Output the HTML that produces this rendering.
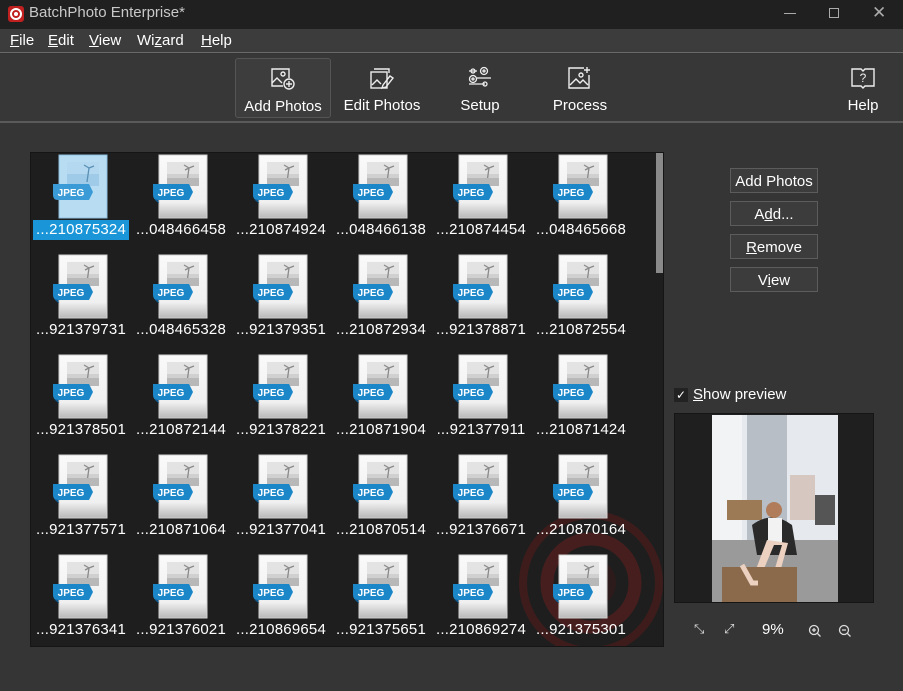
<!DOCTYPE html>
<html><head><meta charset="utf-8"><style>
*{margin:0;padding:0;box-sizing:border-box}
body{width:903px;height:691px;background:#353535;font-family:"Segoe UI","Liberation Sans",sans-serif;color:#fff;position:relative;overflow:hidden;font-size:15px}
.title{position:absolute;left:0;top:0;width:903px;height:29px;background:#202020;color:#c8c8c8}
.menu{position:absolute;top:29px;left:0;width:903px;height:24px;background:#3c3c3c;border-bottom:1px solid #6a6a6a}
.menu span{position:absolute;top:3px;font-size:15px;color:#fff}
.tool{position:absolute;top:54px;left:0;width:903px;height:69px;background:#373737;border-bottom:2px solid #5a5a5a}
.tb{position:absolute;top:4px;height:60px;text-align:center;font-size:15px}
.tb svg{display:block;margin:7px auto 6px}
.list{position:absolute;left:30px;top:152px;width:634px;height:495px;background:#1e1e1e;border:1px solid #151515;overflow:hidden}
.cell{position:absolute;width:100px;height:100px;text-align:center}
.cell svg{position:absolute;left:21px;top:1px}
.cell .l{position:absolute;left:2px;top:67px;width:96px;height:20px;line-height:20px;font-size:15px;color:#fff;letter-spacing:0.2px}
.sel .l{background:#1a96d8}
.btn{position:absolute;left:730px;width:88px;height:25px;background:#3c3c3c;border:1px solid #5c5c5c;text-align:center;line-height:25px;font-size:15px}
u{text-decoration:underline}
</style></head><body>
<svg width="0" height="0" style="position:absolute"><defs>
<linearGradient id="pg" x1="0" y1="0" x2="0" y2="1"><stop offset="0" stop-color="#fafafa"/><stop offset=".75" stop-color="#f0f0f0"/><stop offset="1" stop-color="#b8b8b8"/></linearGradient>
<symbol id="doc" viewBox="0 0 58 66">
<path d="M7 1h48v63H7z" fill="url(#pg)" stroke="#d0d0d0"/>
<rect x="15" y="8" width="32" height="24" fill="#d0d0d0"/>
<rect x="15" y="8" width="32" height="12" fill="#e3e3e3"/>
<path d="M35 28 L37 14 M37 14 l-5 -3 M37 14 l5 -2 M37 14 l-4 2" stroke="#8a8a8a" stroke-width="1.3" fill="none"/>
<rect x="15" y="24" width="32" height="8" fill="#b8b8b8"/>
<path d="M1 30 H37 L41 38 L37 46 H6 Q1 46 1 41z" fill="#1b86c8"/>
<path d="M1 41 Q1 46 6 46 L7 49 Q2 47 1 41z" fill="#0c5a8f"/>
<text x="19" y="42" font-family="Liberation Sans,sans-serif" font-size="10" font-weight="bold" fill="#fff" text-anchor="middle">JPEG</text>
</symbol>
<symbol id="docs" viewBox="0 0 58 66">
<path d="M7 1h48v63H7z" fill="#b8dcf2" stroke="#8fc0e0"/>
<rect x="15" y="8" width="32" height="24" fill="#9fcbe8"/>
<rect x="15" y="8" width="32" height="12" fill="#b3d8ef"/>
<path d="M35 28 L37 14 M37 14 l-5 -3 M37 14 l5 -2" stroke="#5a90b5" stroke-width="1.3" fill="none"/>
<path d="M1 30 H37 L41 38 L37 46 H6 Q1 46 1 41z" fill="#3a9bd6"/>
<text x="19" y="42" font-family="Liberation Sans,sans-serif" font-size="10" font-weight="bold" fill="#fff" text-anchor="middle">JPEG</text>
</symbol>
</defs></svg>
<div class="title">
<svg style="position:absolute;left:8px;top:6px" width="16" height="16"><rect width="16" height="16" rx="3" fill="#c0201f"/><circle cx="8" cy="8" r="5" fill="none" stroke="#fff" stroke-width="2"/><circle cx="8" cy="8" r="2" fill="#fff"/></svg>
<span style="position:absolute;left:29px;top:4px;font-size:15px">BatchPhoto Enterprise*</span>
<span style="position:absolute;left:784px;top:13px;width:12px;height:1px;background:#aaa"></span>
<span style="position:absolute;left:829px;top:8px;width:10px;height:10px;border:1px solid #aaa"></span>
<span style="position:absolute;left:872px;top:3px;font-size:17px;color:#aaa">✕</span>
</div>
<div class="menu">
<span style="left:10px"><u>F</u>ile</span><span style="left:48px"><u>E</u>dit</span><span style="left:89px"><u>V</u>iew</span><span style="left:137px">Wi<u>z</u>ard</span><span style="left:201px"><u>H</u>elp</span>
</div>
<div class="tool">
<div class="tb" style="left:235px;width:96px;background:#3d3d3d;border:1px solid #555;border-radius:3px">
<svg width="26" height="26" viewBox="0 0 26 24" fill="none" stroke="#eee" stroke-width="1.4"><path d="M13 19H2V2h17v9"/><circle cx="13" cy="7" r="2"/><path d="M2 16l5-5 5 5"/><circle cx="19" cy="17" r="5"/><path d="M19 14v6M16 17h6"/></svg>Add Photos</div>
<div class="tb" style="left:337px;width:90px">
<svg width="26" height="26" viewBox="0 0 26 24" fill="none" stroke="#eee" stroke-width="1.4"><path d="M5 3h15v4"/><rect x="2" y="6" width="16" height="16"/><path d="M3 19l5-5 4 4"/><path d="M14 19l7-9 3 2-7 9-4 1z"/></svg>Edit Photos</div>
<div class="tb" style="left:440px;width:80px">
<svg width="26" height="26" viewBox="0 0 26 24" fill="none" stroke="#eee" stroke-width="1.3"><path d="M2 5h8M2 18h16"/><circle cx="6" cy="5" r="2"/><circle cx="18" cy="18" r="2"/><circle cx="17" cy="5" r="3.5"/><circle cx="17" cy="5" r="1"/><circle cx="6" cy="13" r="3.5"/><circle cx="6" cy="13" r="1"/><path d="M10 12h14"/></svg>Setup</div>
<div class="tb" style="left:540px;width:80px">
<svg width="26" height="26" viewBox="0 0 26 24" fill="none" stroke="#eee" stroke-width="1.4"><path d="M17 2H2v20h20V9"/><path d="M3 19l6-6 4 4 3-3 5 5"/><circle cx="14" cy="9" r="2"/><path d="M20 1v6M17 4h6"/></svg>Process</div>
<div class="tb" style="left:838px;width:50px">
<svg width="26" height="26" viewBox="0 0 26 24" fill="none" stroke="#eee" stroke-width="1.4"><path d="M2 3h9l2 2 2-2h9v17h-9l-2 2-2-2H2z"/><text x="13" y="16" font-size="12" fill="#eee" stroke="none" text-anchor="middle" font-family="Liberation Sans">?</text></svg>Help</div>
</div>
<div class="list">
<svg style="position:absolute;left:475px;top:345px" width="170" height="170" viewBox="0 0 170 170" opacity=".55"><circle cx="85" cy="85" r="68" fill="none" stroke="#5a1c1c" stroke-width="8"/><circle cx="85" cy="85" r="44" fill="none" stroke="#6a1f1f" stroke-width="13"/><circle cx="85" cy="85" r="25" fill="#3a1a1a"/></svg>
<div style="position:absolute;left:625px;top:0;width:7px;height:120px;background:#8a8a8a"></div>
<div class="cell sel" style="left:0;top:0"><svg width="58" height="66"><use href="#docs"/></svg><div class="l">...210875324</div></div>
<div class="cell" style="left:100px;top:0"><svg width="58" height="66"><use href="#doc"/></svg><div class="l">...048466458</div></div>
<div class="cell" style="left:200px;top:0"><svg width="58" height="66"><use href="#doc"/></svg><div class="l">...210874924</div></div>
<div class="cell" style="left:300px;top:0"><svg width="58" height="66"><use href="#doc"/></svg><div class="l">...048466138</div></div>
<div class="cell" style="left:400px;top:0"><svg width="58" height="66"><use href="#doc"/></svg><div class="l">...210874454</div></div>
<div class="cell" style="left:500px;top:0"><svg width="58" height="66"><use href="#doc"/></svg><div class="l">...048465668</div></div>
<div class="cell" style="left:0;top:100px"><svg width="58" height="66"><use href="#doc"/></svg><div class="l">...921379731</div></div>
<div class="cell" style="left:100px;top:100px"><svg width="58" height="66"><use href="#doc"/></svg><div class="l">...048465328</div></div>
<div class="cell" style="left:200px;top:100px"><svg width="58" height="66"><use href="#doc"/></svg><div class="l">...921379351</div></div>
<div class="cell" style="left:300px;top:100px"><svg width="58" height="66"><use href="#doc"/></svg><div class="l">...210872934</div></div>
<div class="cell" style="left:400px;top:100px"><svg width="58" height="66"><use href="#doc"/></svg><div class="l">...921378871</div></div>
<div class="cell" style="left:500px;top:100px"><svg width="58" height="66"><use href="#doc"/></svg><div class="l">...210872554</div></div>
<div class="cell" style="left:0;top:200px"><svg width="58" height="66"><use href="#doc"/></svg><div class="l">...921378501</div></div>
<div class="cell" style="left:100px;top:200px"><svg width="58" height="66"><use href="#doc"/></svg><div class="l">...210872144</div></div>
<div class="cell" style="left:200px;top:200px"><svg width="58" height="66"><use href="#doc"/></svg><div class="l">...921378221</div></div>
<div class="cell" style="left:300px;top:200px"><svg width="58" height="66"><use href="#doc"/></svg><div class="l">...210871904</div></div>
<div class="cell" style="left:400px;top:200px"><svg width="58" height="66"><use href="#doc"/></svg><div class="l">...921377911</div></div>
<div class="cell" style="left:500px;top:200px"><svg width="58" height="66"><use href="#doc"/></svg><div class="l">...210871424</div></div>
<div class="cell" style="left:0;top:300px"><svg width="58" height="66"><use href="#doc"/></svg><div class="l">...921377571</div></div>
<div class="cell" style="left:100px;top:300px"><svg width="58" height="66"><use href="#doc"/></svg><div class="l">...210871064</div></div>
<div class="cell" style="left:200px;top:300px"><svg width="58" height="66"><use href="#doc"/></svg><div class="l">...921377041</div></div>
<div class="cell" style="left:300px;top:300px"><svg width="58" height="66"><use href="#doc"/></svg><div class="l">...210870514</div></div>
<div class="cell" style="left:400px;top:300px"><svg width="58" height="66"><use href="#doc"/></svg><div class="l">...921376671</div></div>
<div class="cell" style="left:500px;top:300px"><svg width="58" height="66"><use href="#doc"/></svg><div class="l">...210870164</div></div>
<div class="cell" style="left:0;top:400px"><svg width="58" height="66"><use href="#doc"/></svg><div class="l">...921376341</div></div>
<div class="cell" style="left:100px;top:400px"><svg width="58" height="66"><use href="#doc"/></svg><div class="l">...921376021</div></div>
<div class="cell" style="left:200px;top:400px"><svg width="58" height="66"><use href="#doc"/></svg><div class="l">...210869654</div></div>
<div class="cell" style="left:300px;top:400px"><svg width="58" height="66"><use href="#doc"/></svg><div class="l">...921375651</div></div>
<div class="cell" style="left:400px;top:400px"><svg width="58" height="66"><use href="#doc"/></svg><div class="l">...210869274</div></div>
<div class="cell" style="left:500px;top:400px"><svg width="58" height="66"><use href="#doc"/></svg><div class="l">...921375301</div></div>
</div>
<div class="btn" style="top:168px">Add Photos</div>
<div class="btn" style="top:201px">A<u>d</u>d...</div>
<div class="btn" style="top:234px"><u>R</u>emove</div>
<div class="btn" style="top:267px">V<u>i</u>ew</div>
<div style="position:absolute;left:674px;top:388px;width:14px;height:14px;background:#222;font-size:12px;text-align:center;line-height:14px">✓</div>
<div style="position:absolute;left:693px;top:386px;font-size:15px"><u>S</u>how preview</div>
<div style="position:absolute;left:674px;top:413px;width:200px;height:190px;background:#1f1f1f;border:1px solid #151515">
<svg style="position:absolute;left:37px;top:1px" width="126" height="187" viewBox="0 0 126 187">
<rect width="126" height="187" fill="#e6e9ee"/>
<rect x="35" y="0" width="40" height="130" fill="#b8bec6"/>
<rect x="0" y="0" width="30" height="187" fill="#f2f3f5"/>
<rect x="78" y="60" width="25" height="45" fill="#d6c8c0"/>
<rect x="103" y="80" width="20" height="30" fill="#555"/>
<rect x="15" y="85" width="35" height="20" fill="#9b7a55"/>
<rect x="0" y="125" width="126" height="62" fill="#9a9a9a"/>
<path d="M40 110 Q60 95 80 110 L85 140 L45 140z" fill="#2a2a2a"/>
<circle cx="62" cy="95" r="8" fill="#b07c5a"/>
<path d="M56 103h14v25H56z" fill="#f2f2f2"/>
<path d="M55 125 L40 165 L46 168 L62 130 L70 130 L58 170 L64 172 L76 128z" fill="#ecd0c0"/>
<rect x="10" y="152" width="75" height="35" fill="#8a6a4a"/>
<path d="M30 150 L40 168 L46 168" stroke="#ecd0c0" stroke-width="5" fill="none"/>
</svg>
</div>
<div style="position:absolute;left:694px;top:621px;font-size:13px;color:#ddd">⤡</div>
<div style="position:absolute;left:724px;top:621px;font-size:13px;color:#ddd">⤢</div>
<div style="position:absolute;left:762px;top:621px;font-size:15px">9%</div>
<svg style="position:absolute;left:808px;top:624px" width="14" height="14" fill="none" stroke="#ddd" stroke-width="1.3"><circle cx="6" cy="6" r="4.5"/><path d="M9.5 9.5l3 3M4 6h4M6 4v4"/></svg>
<svg style="position:absolute;left:838px;top:624px" width="14" height="14" fill="none" stroke="#ddd" stroke-width="1.3"><circle cx="6" cy="6" r="4.5"/><path d="M9.5 9.5l3 3M4 6h4"/></svg>
</body></html>
